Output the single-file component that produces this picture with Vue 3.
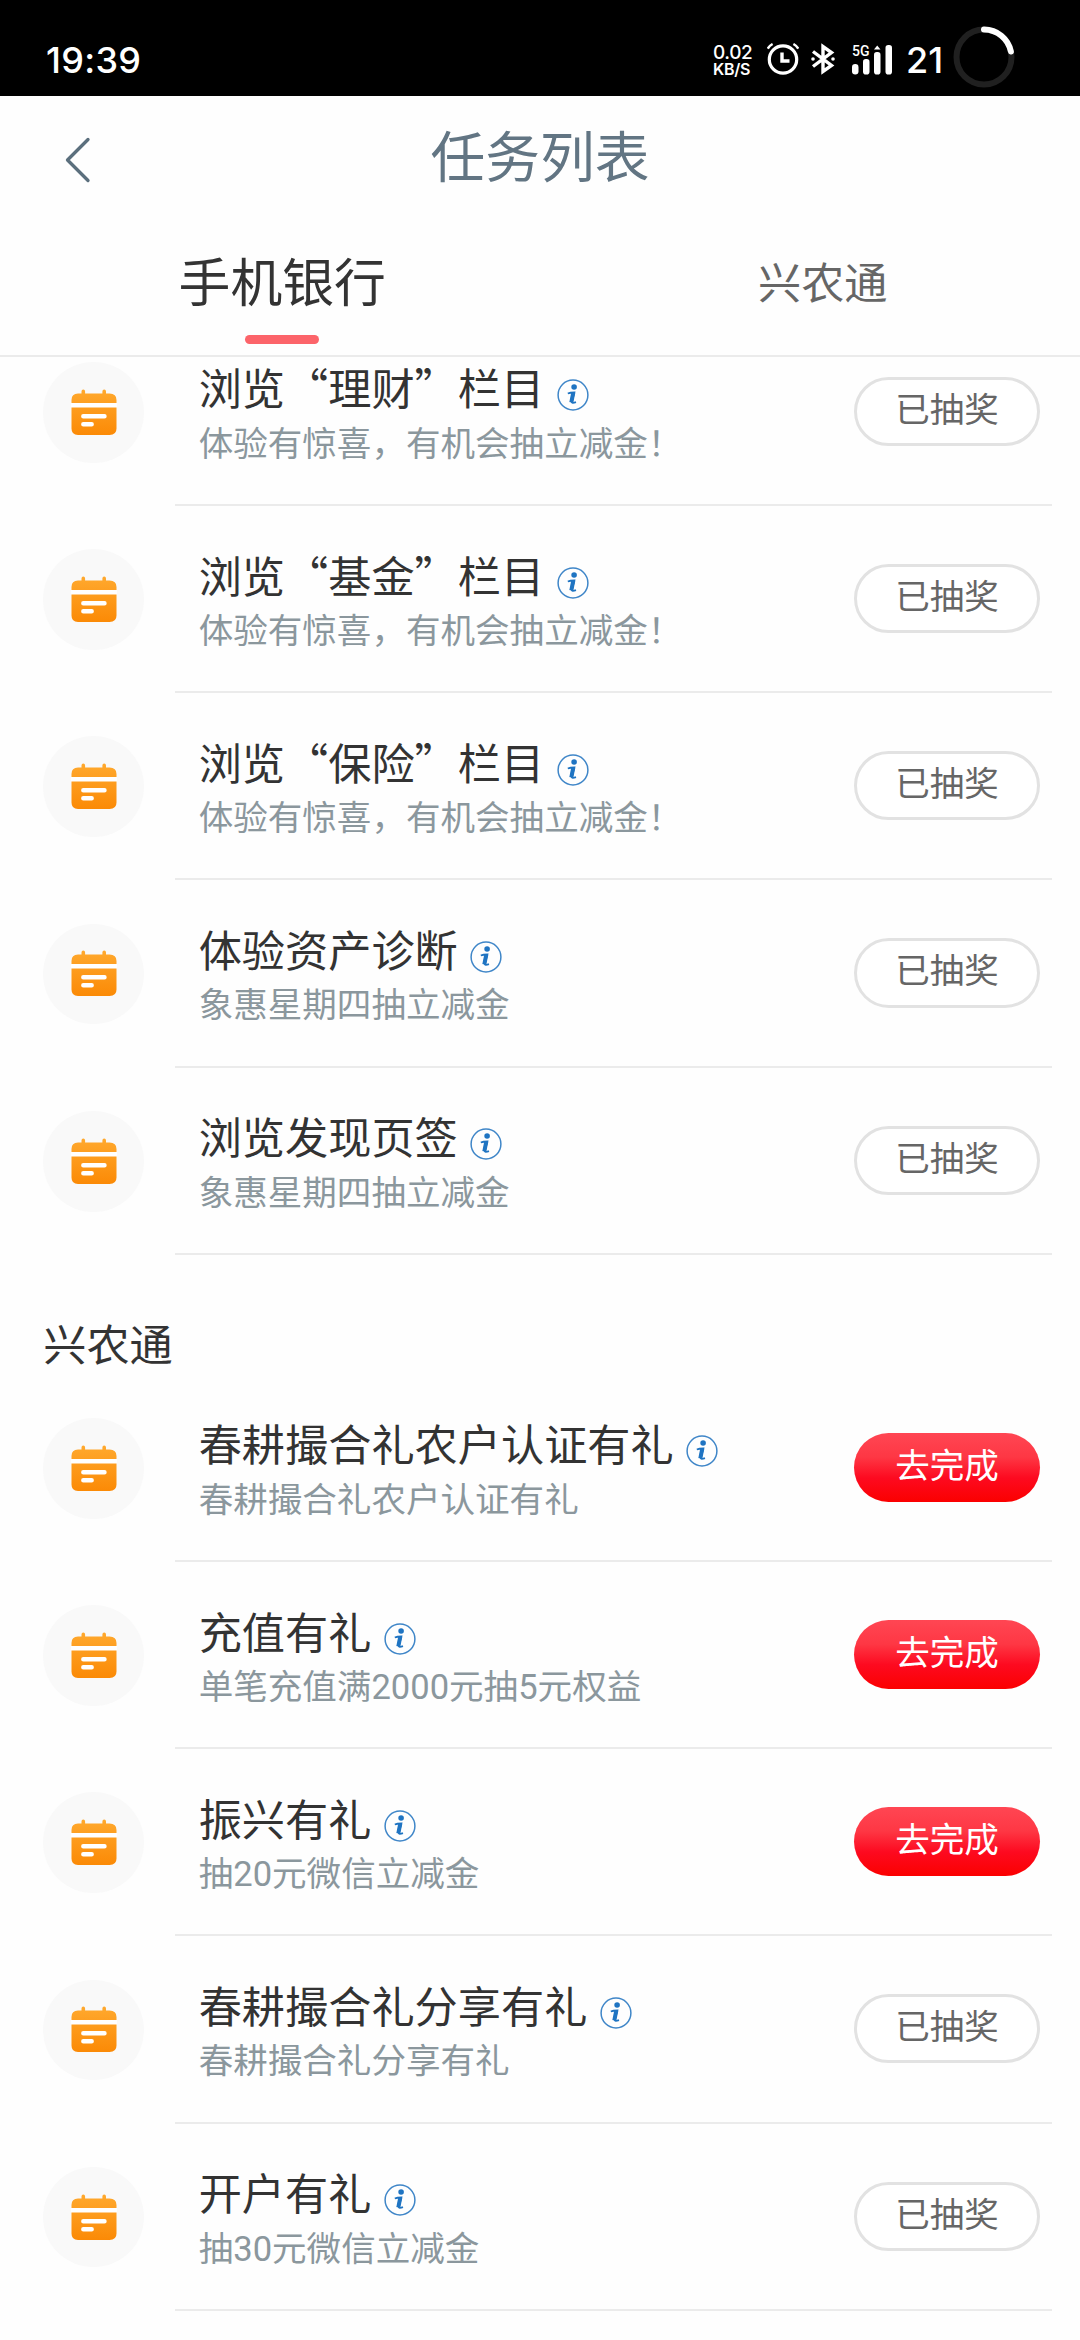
<script setup>
const groups = [
  {
    title: '',
    tasks: [
      { name: '浏览“理财”栏目', desc: '体验有惊喜，有机会抽立减金！', done: true },
      { name: '浏览“基金”栏目', desc: '体验有惊喜，有机会抽立减金！', done: true },
      { name: '浏览“保险”栏目', desc: '体验有惊喜，有机会抽立减金！', done: true },
      { name: '体验资产诊断', desc: '象惠星期四抽立减金', done: true },
      { name: '浏览发现页签', desc: '象惠星期四抽立减金', done: true },
    ],
  },
  {
    title: '兴农通',
    tasks: [
      { name: '春耕撮合礼农户认证有礼', desc: '春耕撮合礼农户认证有礼', done: false },
      { name: '充值有礼', desc: '单笔充值满2000元抽5元权益', done: false },
      { name: '振兴有礼', desc: '抽20元微信立减金', done: false },
      { name: '春耕撮合礼分享有礼', desc: '春耕撮合礼分享有礼', done: true },
      { name: '开户有礼', desc: '抽30元微信立减金', done: true },
    ],
  },
]
</script>

<template>
  <div class="screen" lang="zh-CN">
    <div class="status">
      <span class="clock">19:39</span>
      <div class="indicators">
        <div class="speed"><span class="rate">0.02</span><span class="unit">KB/S</span></div>
        <svg class="alarm" width="32" height="32" viewBox="0 0 32 32" fill="none" stroke="#fff">
          <circle cx="16" cy="16.5" r="13.7" stroke-width="3.2" />
          <path d="M15 9.500v8.500h7.500" stroke-width="3.400" />
          <path d="M.8 5.600Q2.500 2.600 5.600 1M31.200 5.600Q29.500 2.600 26.400 1" stroke-width="2.400" />
        </svg>
        <svg class="bluetooth" width="24" height="32" viewBox="0 0 24 32" fill="none" stroke="#fff" stroke-width="3.400">
          <path d="M2 8.500L20.500 22.500L12 28.500V3.500L20.500 9.500L2 23.500" />
          <circle cx="2" cy="16" r="1.800" fill="#fff" stroke="none" />
          <circle cx="22" cy="16" r="1.800" fill="#fff" stroke="none" />
        </svg>
        <div class="signal">
          <span class="net">5G</span>
          <svg width="41" height="30" viewBox="0 0 41 30" fill="#fff">
            <rect x="0" y="19" width="6.500" height="10.500" rx="3.200" />
            <rect x="11" y="14" width="6.500" height="15.500" rx="2.800" />
            <rect x="22" y="7" width="6.500" height="22.500" rx="2.800" />
            <path d="M22 4.500L25.200.5L28.500 4.500Z" />
            <rect x="33.500" y="0" width="6.500" height="29.500" rx="2.800" />
          </svg>
        </div>
        <span class="battery">21</span>
        <svg class="ring" width="62" height="62" viewBox="0 0 62 62" fill="none" stroke-width="6">
          <circle cx="31" cy="31" r="27.500" stroke="#202020" />
          <path d="M31 3.500A27.500 27.500 0 0 1 57.900 25.500" stroke="#fff" stroke-linecap="round" />
        </svg>
      </div>
    </div>

    <header class="header">
      <div class="nav">
        <svg class="back" width="26" height="46" viewBox="0 0 26 46" fill="none">
          <path d="M23 2.500L2.500 23L23 43.500" stroke="#5b6f7d" stroke-width="3.300" stroke-linecap="round" stroke-linejoin="round" />
        </svg>
        <h1>任务列表</h1>
      </div>
      <nav class="tabs">
        <div class="tab active"><span>手机银行</span></div>
        <div class="tab"><span>兴农通</span></div>
      </nav>
    </header>

    <main class="list">
      <section v-for="(group, g) in groups" :key="g" class="group">
        <h2 v-if="group.title">{{ group.title }}</h2>
        <div v-for="task in group.tasks" :key="task.name" class="row">
          <div class="avatar">
            <svg width="46" height="47" viewBox="0 0 46 47">
              <defs>
                <linearGradient id="cal" x1="0" y1="0" x2="0" y2="1">
                  <stop offset="0" stop-color="#ffa92e" />
                  <stop offset="1" stop-color="#fb8a06" />
                </linearGradient>
              </defs>
              <path
                fill="url(#cal)"
                d="M7 4.500H10.500V2.500Q10.500.5 12.300.5T14.100 2.500V4.500H31.400V2.500Q31.400 .5 33.200.5T35 2.500V4.500H38.500Q45.500 4.500 45.500 11V39.500Q45.500 46 38.500 46H7Q.5 46 .5 39.500V11Q.5 4.500 7 4.500Z"
              />
              <path fill="#fff" d="M0 14H46V18.500H0Z" />
              <path stroke="#fff" stroke-width="4.400" stroke-linecap="round" d="M12.300 27.300H33.500M12.300 35.300H20.700" />
            </svg>
          </div>
          <div class="body">
            <div class="text">
              <div class="name">
                <span>{{ task.name }}</span>
                <svg class="info" width="32" height="32" viewBox="0 0 32 32" fill="none">
                  <circle cx="16" cy="16" r="14.900" stroke="#3f86c8" stroke-width="1.500" />
                  <circle cx="17.100" cy="8" r="2.800" fill="#1f74c2" />
                  <path d="M10.800 14.500Q13 13.500 17.400 13.500L14.800 22.500Q14.400 25 19 23.200" stroke="#1f74c2" stroke-width="1.800" />
                  <path d="M16.300 13.500L14.300 23.500" stroke="#1f74c2" stroke-width="4" />
                </svg>
              </div>
              <div class="desc">{{ task.desc }}</div>
            </div>
            <button :class="['action', task.done ? 'done' : 'todo']">{{ task.done ? '已抽奖' : '去完成' }}</button>
          </div>
        </div>
      </section>
    </main>
  </div>
</template>

<style>
body {
  margin: 0;
  background: #fefefe;
}
</style>

<style scoped>
.screen {
  width: 1080px;
  height: 2340px;
  overflow: hidden;
  display: flex;
  flex-direction: column;
  background: #fefefe;
  font-family: 'Noto Sans CJK SC', sans-serif;
  color: #333;
}
.status {
  flex: none;
  height: 96px;
  box-sizing: border-box;
  padding: 24px 65px 0 46px;
  display: flex;
  justify-content: space-between;
  align-items: flex-start;
  background: #000;
  color: #fff;
  font-family: Inter, sans-serif;
}
.clock,
.battery {
  font-size: 36px;
  font-weight: 500;
  line-height: 72px;
}
.clock {
  letter-spacing: 0.3px;
}
.indicators {
  display: flex;
  align-items: flex-start;
}
.speed {
  width: 40px;
  margin: 20px 14px 0 0;
  display: flex;
  flex-direction: column;
  font-weight: 500;
  white-space: nowrap;
}
.rate {
  font-size: 19px;
  line-height: 18px;
  letter-spacing: -0.4px;
}
.unit {
  font-size: 16px;
  font-weight: 600;
  line-height: 15px;
  letter-spacing: -0.3px;
}
.alarm {
  margin: 19px 12px 0 0;
}
.bluetooth {
  margin: 19px 17px 0 0;
}
.signal {
  display: grid;
  width: 41px;
  margin: 21px 13px 0 0;
}
.signal > * {
  grid-area: 1 / 1;
}
.net {
  font-family: Roboto, sans-serif;
  font-size: 14px;
  font-weight: 500;
  line-height: 12px;
}
.battery {
  width: 38px;
  margin-right: 9px;
}
.ring {
  margin-top: 2px;
}
.header {
  flex: none;
  height: 261px;
  box-sizing: border-box;
  border-bottom: 2px solid #ebebeb;
}
.nav {
  height: 127px;
  display: grid;
  grid-template-columns: 180px 1fr 180px;
  align-items: center;
}
.back {
  margin-left: 65px;
}
h1 {
  margin: 0;
  padding-bottom: 12px;
  text-align: center;
  font-size: 54.72px;
  line-height: 80px;
  font-weight: 400;
  color: #627583;
}
.tabs {
  height: 132px;
  display: flex;
}
.tab {
  flex: 1;
  display: flex;
  flex-direction: column;
  align-items: center;
  font-size: 43.2px;
  line-height: 114px;
  color: #666;
}
.tab:first-child {
  margin: 0 -9px 0 25px;
}
.tab:last-child {
  padding-left: 35px;
}
.active {
  font-size: 51.84px;
  color: #333;
}
.active::after {
  content: '';
  width: 74px;
  height: 9px;
  margin-top: -2px;
  border-radius: 5px;
  background: #fc646a;
}
.list {
  flex: 1;
  overflow: hidden;
}
.group:first-child {
  margin-top: -38.200px;
}
h2 {
  margin: 0;
  padding-left: 43.2px;
  height: 120px;
  font-size: 43.2px;
  line-height: 175px;
  font-weight: 400;
}
.row {
  height: 187.2px;
  display: flex;
  align-items: center;
  padding: 0 28px 0 43.2px;
}
.avatar {
  flex: none;
  width: 100.8px;
  height: 100.8px;
  border-radius: 50%;
  display: flex;
  align-items: center;
  justify-content: center;
  background: #f9f9f9;
}
.avatar svg {
  display: block;
}
.body {
  flex: 1;
  align-self: stretch;
  box-sizing: border-box;
  margin-left: 31px;
  padding: 0 12px 0 23.7px;
  display: flex;
  justify-content: space-between;
  align-items: center;
  border-bottom: 2px solid #ebebeb;
}
.text {
  padding-top: 4.5px;
}
.name {
  display: flex;
  align-items: center;
  height: 56px;
  font-size: 43.2px;
  line-height: 56px;
  white-space: nowrap;
}
.info {
  margin: 18px 0 0 12.500px;
}
.desc {
  margin-top: 4.5px;
  font-family: Roboto, 'Noto Sans CJK SC', sans-serif;
  font-size: 34.56px;
  line-height: 50px;
  color: #8b979d;
}
.action {
  width: 186px;
  height: 69.1px;
  box-sizing: border-box;
  margin: 0;
  padding: 0 0 9px;
  border: 0;
  border-radius: 35px;
  font: 400 34.56px/54px 'Noto Sans CJK SC', sans-serif;
}
.done {
  border: 3px solid #e2e2e2;
  background: #fff;
  color: #666;
}
.todo {
  background: linear-gradient(#ff4653 0%, #fe3744 35%, #fd0a20 65%, #fb0000 100%);
  color: #fff;
}
</style>
